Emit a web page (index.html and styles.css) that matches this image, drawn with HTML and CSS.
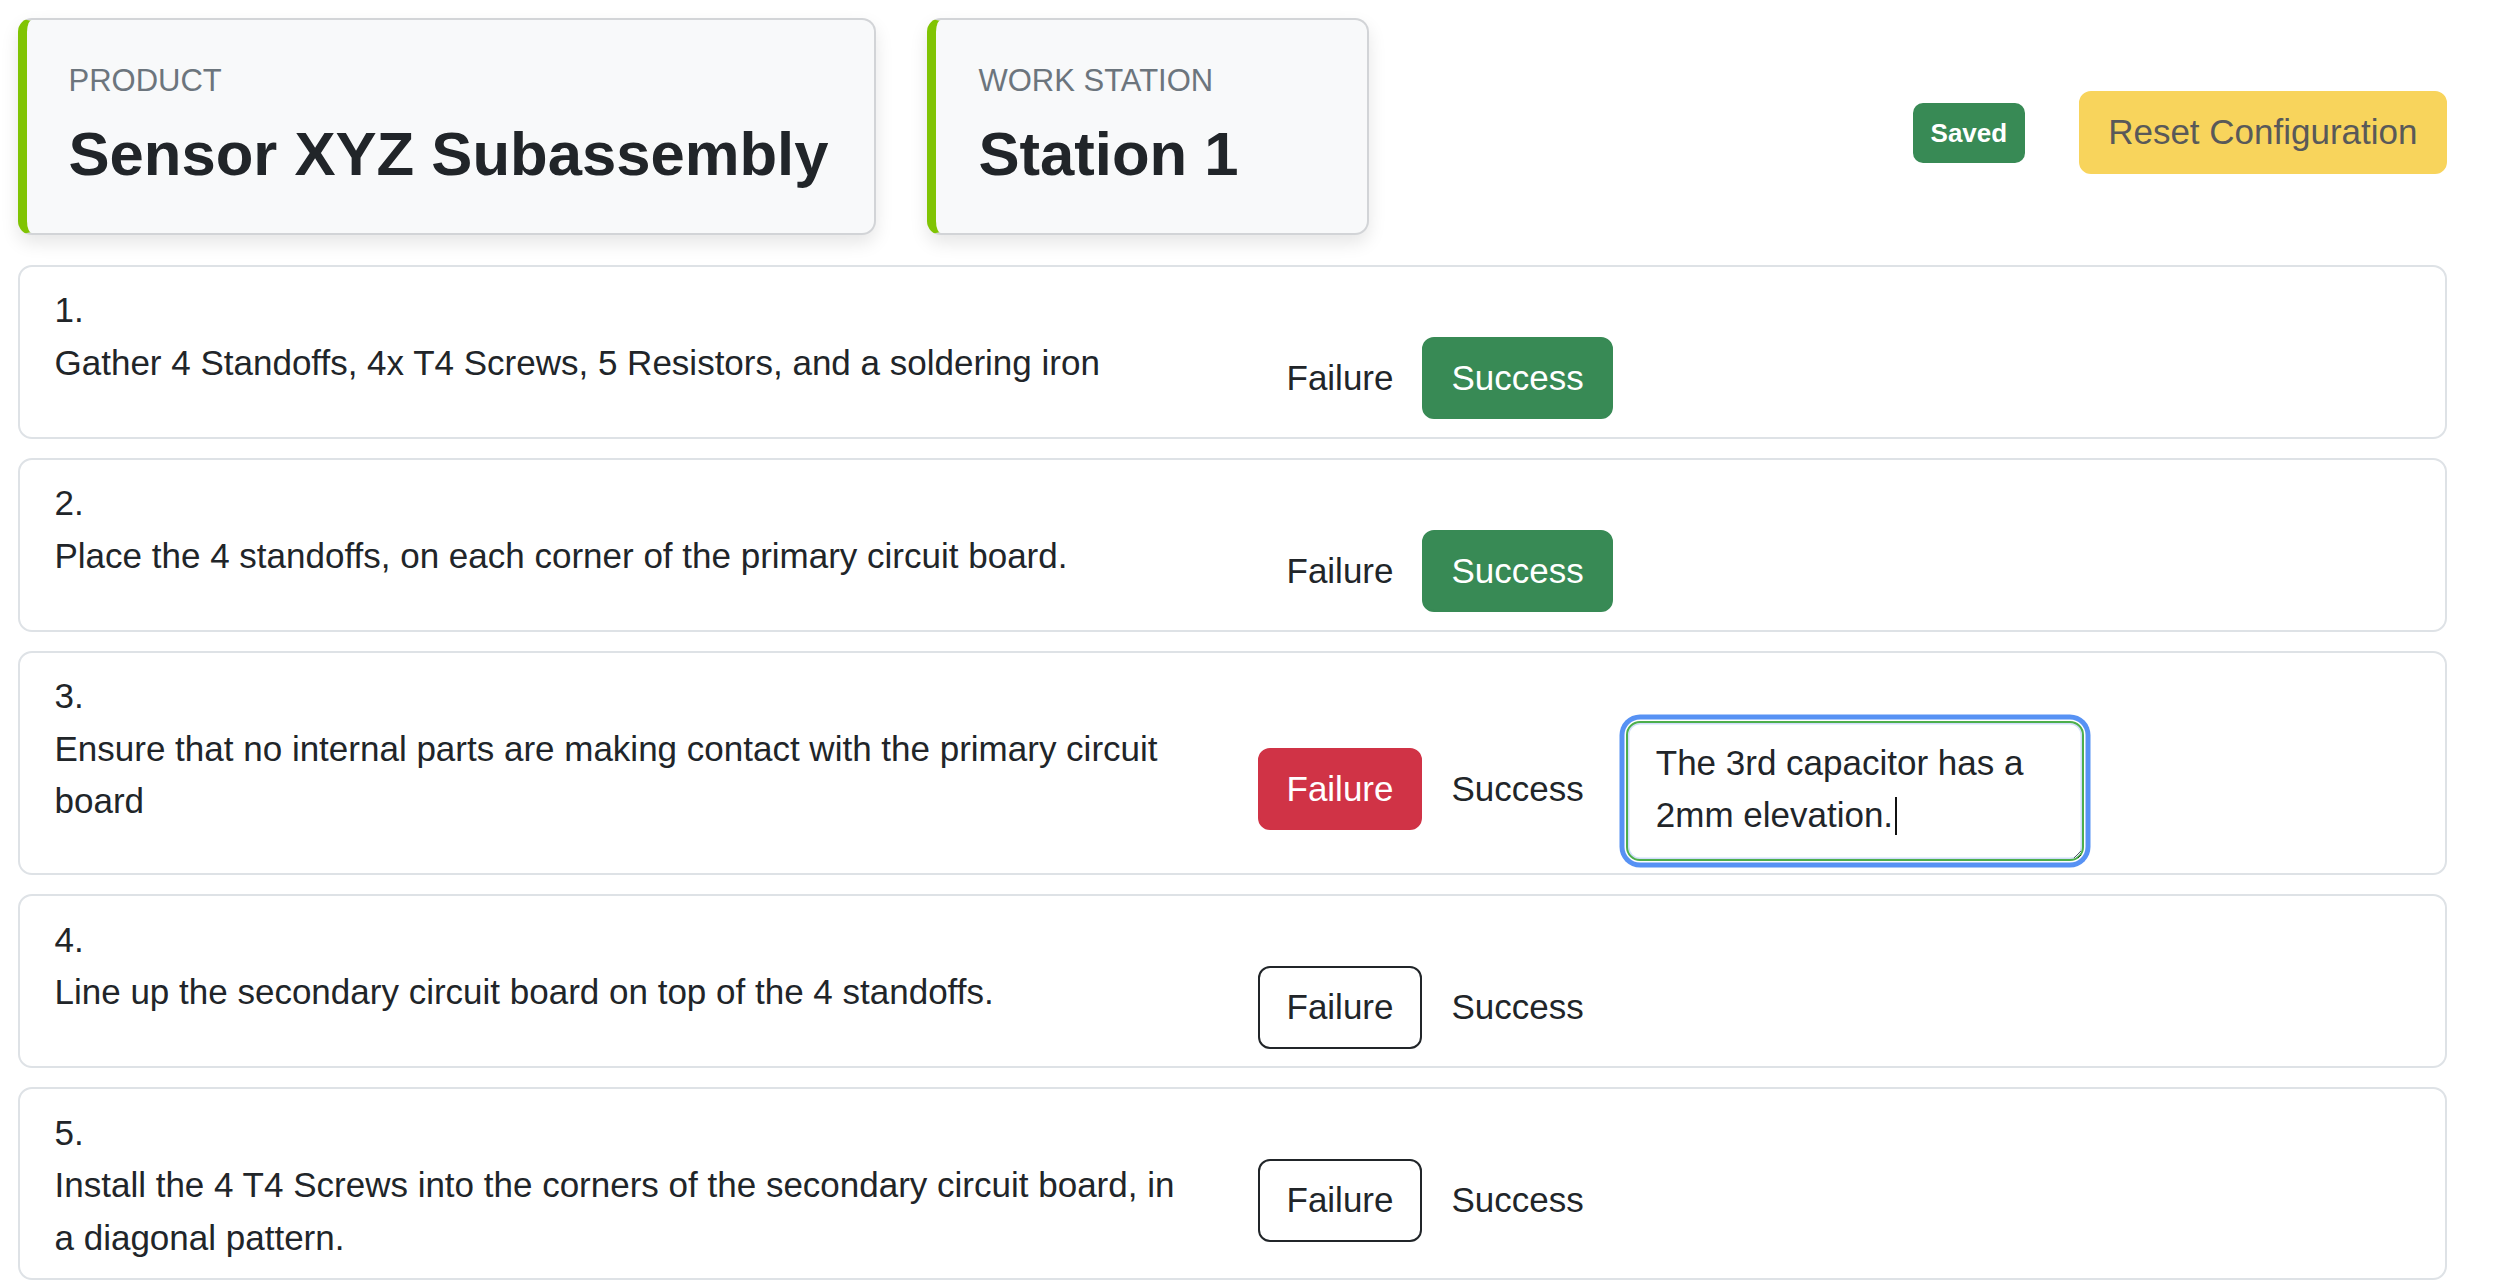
FILE: index.html
```html
<!DOCTYPE html>
<html lang="en">
<head>
<meta charset="utf-8">
<title>Assembly Steps</title>
<link rel="stylesheet" href="styles.css">
</head>
<body>
<div class="page">
  <header class="top">
    <div class="info-card product">
      <div class="info-label">Product</div>
      <h1 class="info-value">Sensor XYZ Subassembly</h1>
    </div>
    <div class="info-card station">
      <div class="info-label">Work Station</div>
      <h1 class="info-value">Station 1</h1>
    </div>
    <div class="top-actions">
      <span class="badge-saved">Saved</span>
      <button class="btn btn-reset" type="button">Reset Configuration</button>
    </div>
  </header>

  <main class="steps">
    <section class="step">
      <div class="step-num">1.</div>
      <div class="step-row">
        <p class="step-text">Gather 4 Standoffs, 4x T4 Screws, 5 Resistors, and a soldering iron</p>
        <div class="step-actions">
          <button class="btn" type="button">Failure</button>
          <button class="btn btn-success" type="button">Success</button>
        </div>
      </div>
    </section>

    <section class="step">
      <div class="step-num">2.</div>
      <div class="step-row">
        <p class="step-text">Place the 4 standoffs, on each corner of the primary circuit board.</p>
        <div class="step-actions">
          <button class="btn" type="button">Failure</button>
          <button class="btn btn-success" type="button">Success</button>
        </div>
      </div>
    </section>

    <section class="step">
      <div class="step-num">3.</div>
      <div class="step-row">
        <p class="step-text">Ensure that no internal parts are making contact with the primary circuit board</p>
        <div class="step-actions">
          <button class="btn btn-danger" type="button">Failure</button>
          <button class="btn" type="button">Success</button>
          <div class="note">
            <textarea class="note-input">The 3rd capacitor has a 2mm elevation.</textarea>
            <span class="caret"></span>
          </div>
        </div>
      </div>
    </section>

    <section class="step">
      <div class="step-num">4.</div>
      <div class="step-row">
        <p class="step-text">Line up the secondary circuit board on top of the 4 standoffs.</p>
        <div class="step-actions">
          <button class="btn btn-outline" type="button">Failure</button>
          <button class="btn" type="button">Success</button>
        </div>
      </div>
    </section>

    <section class="step">
      <div class="step-num">5.</div>
      <div class="step-row">
        <p class="step-text">Install the 4 T4 Screws into the corners of the secondary circuit board, in a diagonal pattern.</p>
        <div class="step-actions">
          <button class="btn btn-outline" type="button">Failure</button>
          <button class="btn" type="button">Success</button>
        </div>
      </div>
    </section>
  </main>
</div>
</body>
</html>
```
FILE: styles.css
```css
html, body {
  margin: 0;
  padding: 0;
  background: #ffffff;
}

body {
  font-family: "Liberation Sans", Arial, sans-serif;
  font-size: 35px;
  line-height: 1.5;
  color: #212529;
}

.page {
  width: 2429px;
  padding: 18px 0 0 17.5px;
}

/* ---------- header ---------- */
.top {
  display: flex;
  align-items: center;
  margin-bottom: 29.5px;
}

.info-card {
  box-sizing: border-box;
  background: #f8f9fa;
  border: 2px solid #d2d4d7;
  border-left: 9px solid #80c403;
  border-radius: 14px;
  padding: 42px 46px 42px 42px;
  margin-right: 51px;
  box-shadow: 0 8px 18px rgba(0, 0, 0, 0.10);
}

.station {
  min-width: 442px;
}

.info-label {
  font-size: 31px;
  line-height: 1.2;
  color: #6c757d;
  text-transform: uppercase;
  margin-bottom: 18px;
}

.info-value {
  margin: 0;
  font-size: 61.6px;
  line-height: 1.2;
  font-weight: 700;
  color: #212529;
}

.top-actions {
  margin-left: auto;
  display: flex;
  align-items: center;
  gap: 54px;
  padding-top: 12px;
}

.badge-saved {
  display: inline-block;
  background: #388a55;
  color: #ffffff;
  font-weight: 700;
  font-size: 26px;
  line-height: 1;
  padding: 17px 18px;
  border-radius: 10px;
}

/* ---------- buttons ---------- */
.btn {
  font-family: "Liberation Sans", Arial, sans-serif;
  font-size: 35px;
  line-height: 1.5;
  padding: 13px 27px;
  border: 2px solid transparent;
  border-radius: 12px;
  background: transparent;
  color: #212529;
  margin: 0;
}

.btn-success {
  background: #388a55;
  border-color: #388a55;
  color: #ffffff;
}

.btn-danger {
  background: #d03346;
  border-color: #d03346;
  color: #ffffff;
}

.btn-outline {
  border-color: #212529;
}

.btn-reset {
  background: #f8d45c;
  border-color: #f8d45c;
  color: #595959;
}

/* ---------- steps ---------- */
.step {
  background: #ffffff;
  border: 2px solid #dee2e6;
  border-radius: 14px;
  padding: 17.5px 35px;
  margin-bottom: 19px;
}

.step-num {
  line-height: 1.5;
}

.step-row {
  display: grid;
  grid-template-columns: 1143px auto;
  column-gap: 60px;
  align-items: start;
}

.step-text {
  margin: 0 0 -4px 0;
}

.step-actions {
  display: flex;
  align-items: center;
}

.note {
  position: relative;
  margin: -2px 0 -5px 13px;
}

.note-input {
  display: block;
  box-sizing: border-box;
  width: 458px;
  height: 140px;
  margin: 0;
  padding: 14px 28px;
  font-family: "Liberation Sans", Arial, sans-serif;
  font-size: 35px;
  line-height: 1.5;
  color: #212529;
  background: #ffffff;
  border: 2px solid #4cae4c;
  border-radius: 14px;
  outline: none;
  resize: vertical;
  overflow: hidden;
  box-shadow: 0 0 0 1.5px #ffffff, 0 0 0 6.5px #5792f4, inset 0 0 0 1.5px rgba(120, 160, 240, 0.35);
}

.caret {
  position: absolute;
  left: 269px;
  top: 76px;
  width: 2px;
  height: 38px;
  background: #111111;
}
```
